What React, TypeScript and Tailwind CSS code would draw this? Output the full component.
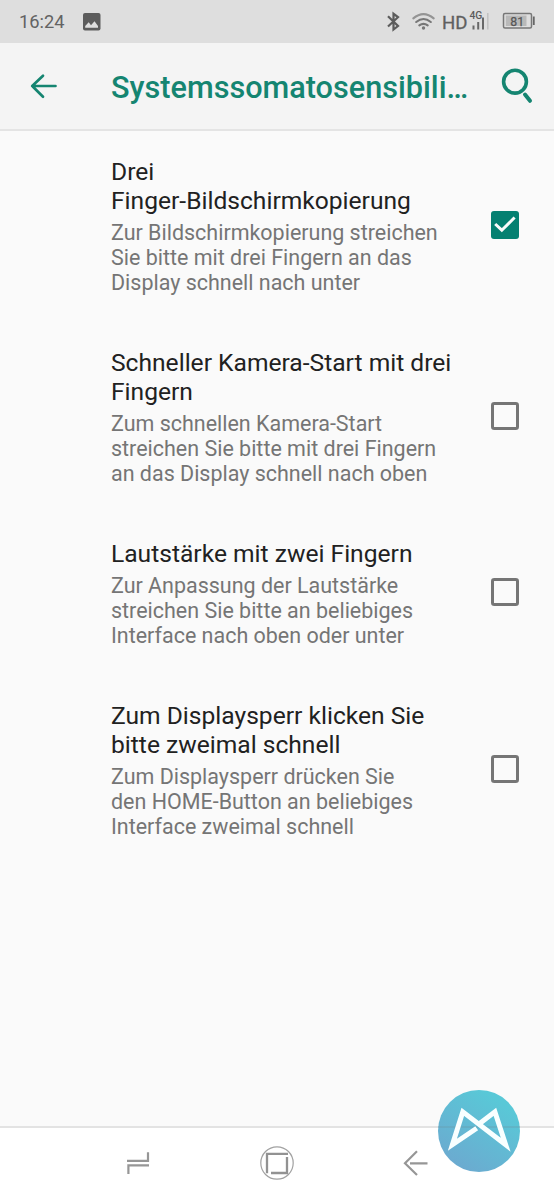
type Setting = { title: string[]; summary: string[]; checked?: boolean; height: string };

const settings: Setting[] = [
  {
    title: ['Drei', 'Finger-Bildschirmkopierung'],
    summary: ['Zur Bildschirmkopierung streichen', 'Sie bitte mit drei Fingern an das', 'Display schnell nach unter'],
    checked: true,
    height: 'h-[191px]',
  },
  {
    title: ['Schneller Kamera-Start mit drei', 'Fingern'],
    summary: ['Zum schnellen Kamera-Start', 'streichen Sie bitte mit drei Fingern', 'an das Display schnell nach oben'],
    height: 'h-[191px]',
  },
  {
    title: ['Lautstärke mit zwei Fingern'],
    summary: ['Zur Anpassung der Lautstärke', 'streichen Sie bitte an beliebiges', 'Interface nach oben oder unter'],
    height: 'h-[162px]',
  },
  {
    title: ['Zum Displaysperr klicken Sie', 'bitte zweimal schnell'],
    summary: ['Zum Displaysperr drücken Sie', 'den HOME-Button an beliebiges', 'Interface zweimal schnell'],
    height: 'h-[191px]',
  },
];

function Checkbox({ checked }: { checked?: boolean }) {
  return (
    <svg width="28" height="28" viewBox="0 0 28 28" fill="none" className="shrink-0">
      {checked ? (
        <>
          <rect width="28" height="28" rx="3" fill="#058071" />
          <path d="M4.2 13 L10.8 19.2 L23.6 6.5" stroke="#fafafa" strokeWidth="3" />
        </>
      ) : (
        <rect x="1.5" y="1.5" width="25" height="25" rx="1.8" stroke="#757575" strokeWidth="3" />
      )}
    </svg>
  );
}

function SettingRow({ title, summary, checked, height }: Setting) {
  return (
    <div className={`flex items-center justify-between pl-[111px] pr-[35px] ${height}`}>
      <div className="whitespace-nowrap pt-0.5">
        <div className="text-[24.6px] leading-[29px] text-[#212121]">
          {title.map((line) => <div key={line}>{line}</div>)}
        </div>
        <div className="mt-[5px] text-[21.47px] leading-[25px] text-[#757575]">
          {summary.map((line) => <div key={line}>{line}</div>)}
        </div>
      </div>
      <Checkbox checked={checked} />
    </div>
  );
}

function StatusBar() {
  return (
    <div className="flex h-[43px] shrink-0 items-center bg-[#dedede] pl-[19px] pr-[19px] text-[#636363]">
      <span className="w-[63px] pt-px text-[18.3px] leading-[22px]">16:24</span>
      <svg width="20" height="20" viewBox="0 0 20 20">
        <rect x="1" y="1" width="17.5" height="17.5" rx="2" fill="#5c5c5c" />
        <path d="M3.2 15.7 V14 L6.7 10.2 L9 13.2 L12.5 9.2 L16 14 V15.7Z" fill="#dedede" />
      </svg>
      <svg width="150" height="43" viewBox="0 0 150 43" fill="none" className="ml-auto">
        <path d="M3 16.3 L13 26 L8.5 29.5 V13.8 L13 17.2 L3 26.5" stroke="#5c5c5c" strokeWidth="2.2" />
        <g stroke="#777" strokeWidth="2.1" strokeLinecap="round">
          <path d="M28.3 18.4 Q38.5 9.8 48.7 18.4" stroke="#949494" />
          <path d="M31.2 22 Q38.5 16 45.8 22" />
          <path d="M34.3 25.4 Q38.5 22.2 42.7 25.4" />
        </g>
        <circle cx="38.5" cy="28" r="1.7" fill="#777" />
        <text x="57" y="28.8" fontSize="19" fill="#606060" stroke="#606060" strokeWidth=".3" textLength="25.5" lengthAdjust="spacingAndGlyphs">HD</text>
        <text x="84.5" y="19" fontSize="10.3" fontWeight="500" fill="#5c5c5c">4G</text>
        <path d="M88.5 25.5 V29.5 M93.2 22 V29.5 M98 17.5 V29.5" stroke="#686868" strokeWidth="2" />
        <path d="M102.8 13 V29.5" stroke="#c1c1c1" strokeWidth="1.5" />
        <rect x="118.5" y="13.5" width="28" height="14.5" rx="1.5" stroke="#777" strokeWidth="1.5" />
        <rect x="120.8" y="15.5" width="20.7" height="10.5" fill="#b9b9b9" />
        <text x="132.2" y="25.5" textAnchor="middle" fontSize="12.3" fill="#565656" stroke="#565656" strokeWidth=".25">81</text>
        <path d="M148.8 16.5 V25" stroke="#666" strokeWidth="1.8" />
      </svg>
    </div>
  );
}

function Toolbar() {
  return (
    <header className="flex h-[88px] shrink-0 items-center border-b-2 border-[#e4e4e4] bg-[#f4f4f4] pl-[29px] pr-[20px] text-[#158571]">
      <svg width="30" height="30" viewBox="0 0 30 30" fill="none" stroke="currentColor" strokeWidth="2.7" strokeLinecap="round" strokeLinejoin="round">
        <path d="M26.5 15 H3.2 M14 4.8 L3.2 15 L14 25.7" />
      </svg>
      <h1 className="ml-[52px] w-[360px] whitespace-nowrap pt-[3px] text-[30.65px] font-medium leading-[36px]">Systemssomatosensibili…</h1>
      <svg width="35" height="40" viewBox="0 0 35 40" fill="none" stroke="currentColor" strokeLinecap="round" className="ml-auto">
        <circle cx="16" cy="15.7" r="11.4" strokeWidth="3.6" />
        <path d="M26 28.6 L31 34.8" strokeWidth="4" />
      </svg>
    </header>
  );
}

function NavigationBar() {
  return (
    <nav className="relative h-[74px] shrink-0 border-t-2 border-[#e3e3e3] bg-white">
      <div className="flex h-[70px] items-center pl-[123px]">
        <svg width="30" height="36" viewBox="0 0 30 36" fill="none" stroke="#969696" strokeWidth="2.2">
          <path d="M4 15.8 H25 V7.2 M26 20.3 H5.4 V29" />
        </svg>
        <svg width="36" height="36" viewBox="0 0 36 36" fill="none" className="ml-[106px]">
          <circle cx="18" cy="18" r="16.2" stroke="#a1a1a1" strokeWidth="1.2" />
          <path d="M8 28.2 V8.8 H29 M28 12 V28 H12" stroke="#929292" strokeWidth="2.3" />
        </svg>
        <svg width="30" height="36" viewBox="0 0 30 36" fill="none" stroke="#969696" strokeWidth="2.2" className="ml-[105px]">
          <path d="M17 6.3 L5 18.3 L17 30 M10 18.3 H27.5" />
        </svg>
      </div>
      <svg width="82" height="82" viewBox="0 0 82 82" fill="none" className="absolute -top-[38px] left-[438px]">
        <defs>
          <linearGradient id="badge-color" x1="18" y1="74" x2="60" y2="10" gradientUnits="userSpaceOnUse">
            <stop stopColor="#6babd0" />
            <stop offset="1" stopColor="#59c8d7" />
          </linearGradient>
        </defs>
        <circle cx="41" cy="41" r="41" fill="url(#badge-color)" />
        <path d="M0 37 H82" stroke="#699baa" strokeOpacity=".45" strokeWidth="1.5" />
        <path d="M38.7 38.3 L14.4 54.7 L24.8 21.8 L67.7 54.8 L56.9 21.8 L41 34" stroke="#f9ffff" strokeWidth="5" />
      </svg>
    </nav>
  );
}

export default function App() {
  return (
    <div className="flex h-[1200px] w-[554px] flex-col overflow-hidden bg-[#fafafa] font-['Roboto',sans-serif]">
      <StatusBar />
      <Toolbar />
      <main className="-mt-[2px] flex-1">
        {settings.map((setting) => <SettingRow key={setting.title[0]} {...setting} />)}
      </main>
      <NavigationBar />
    </div>
  );
}
